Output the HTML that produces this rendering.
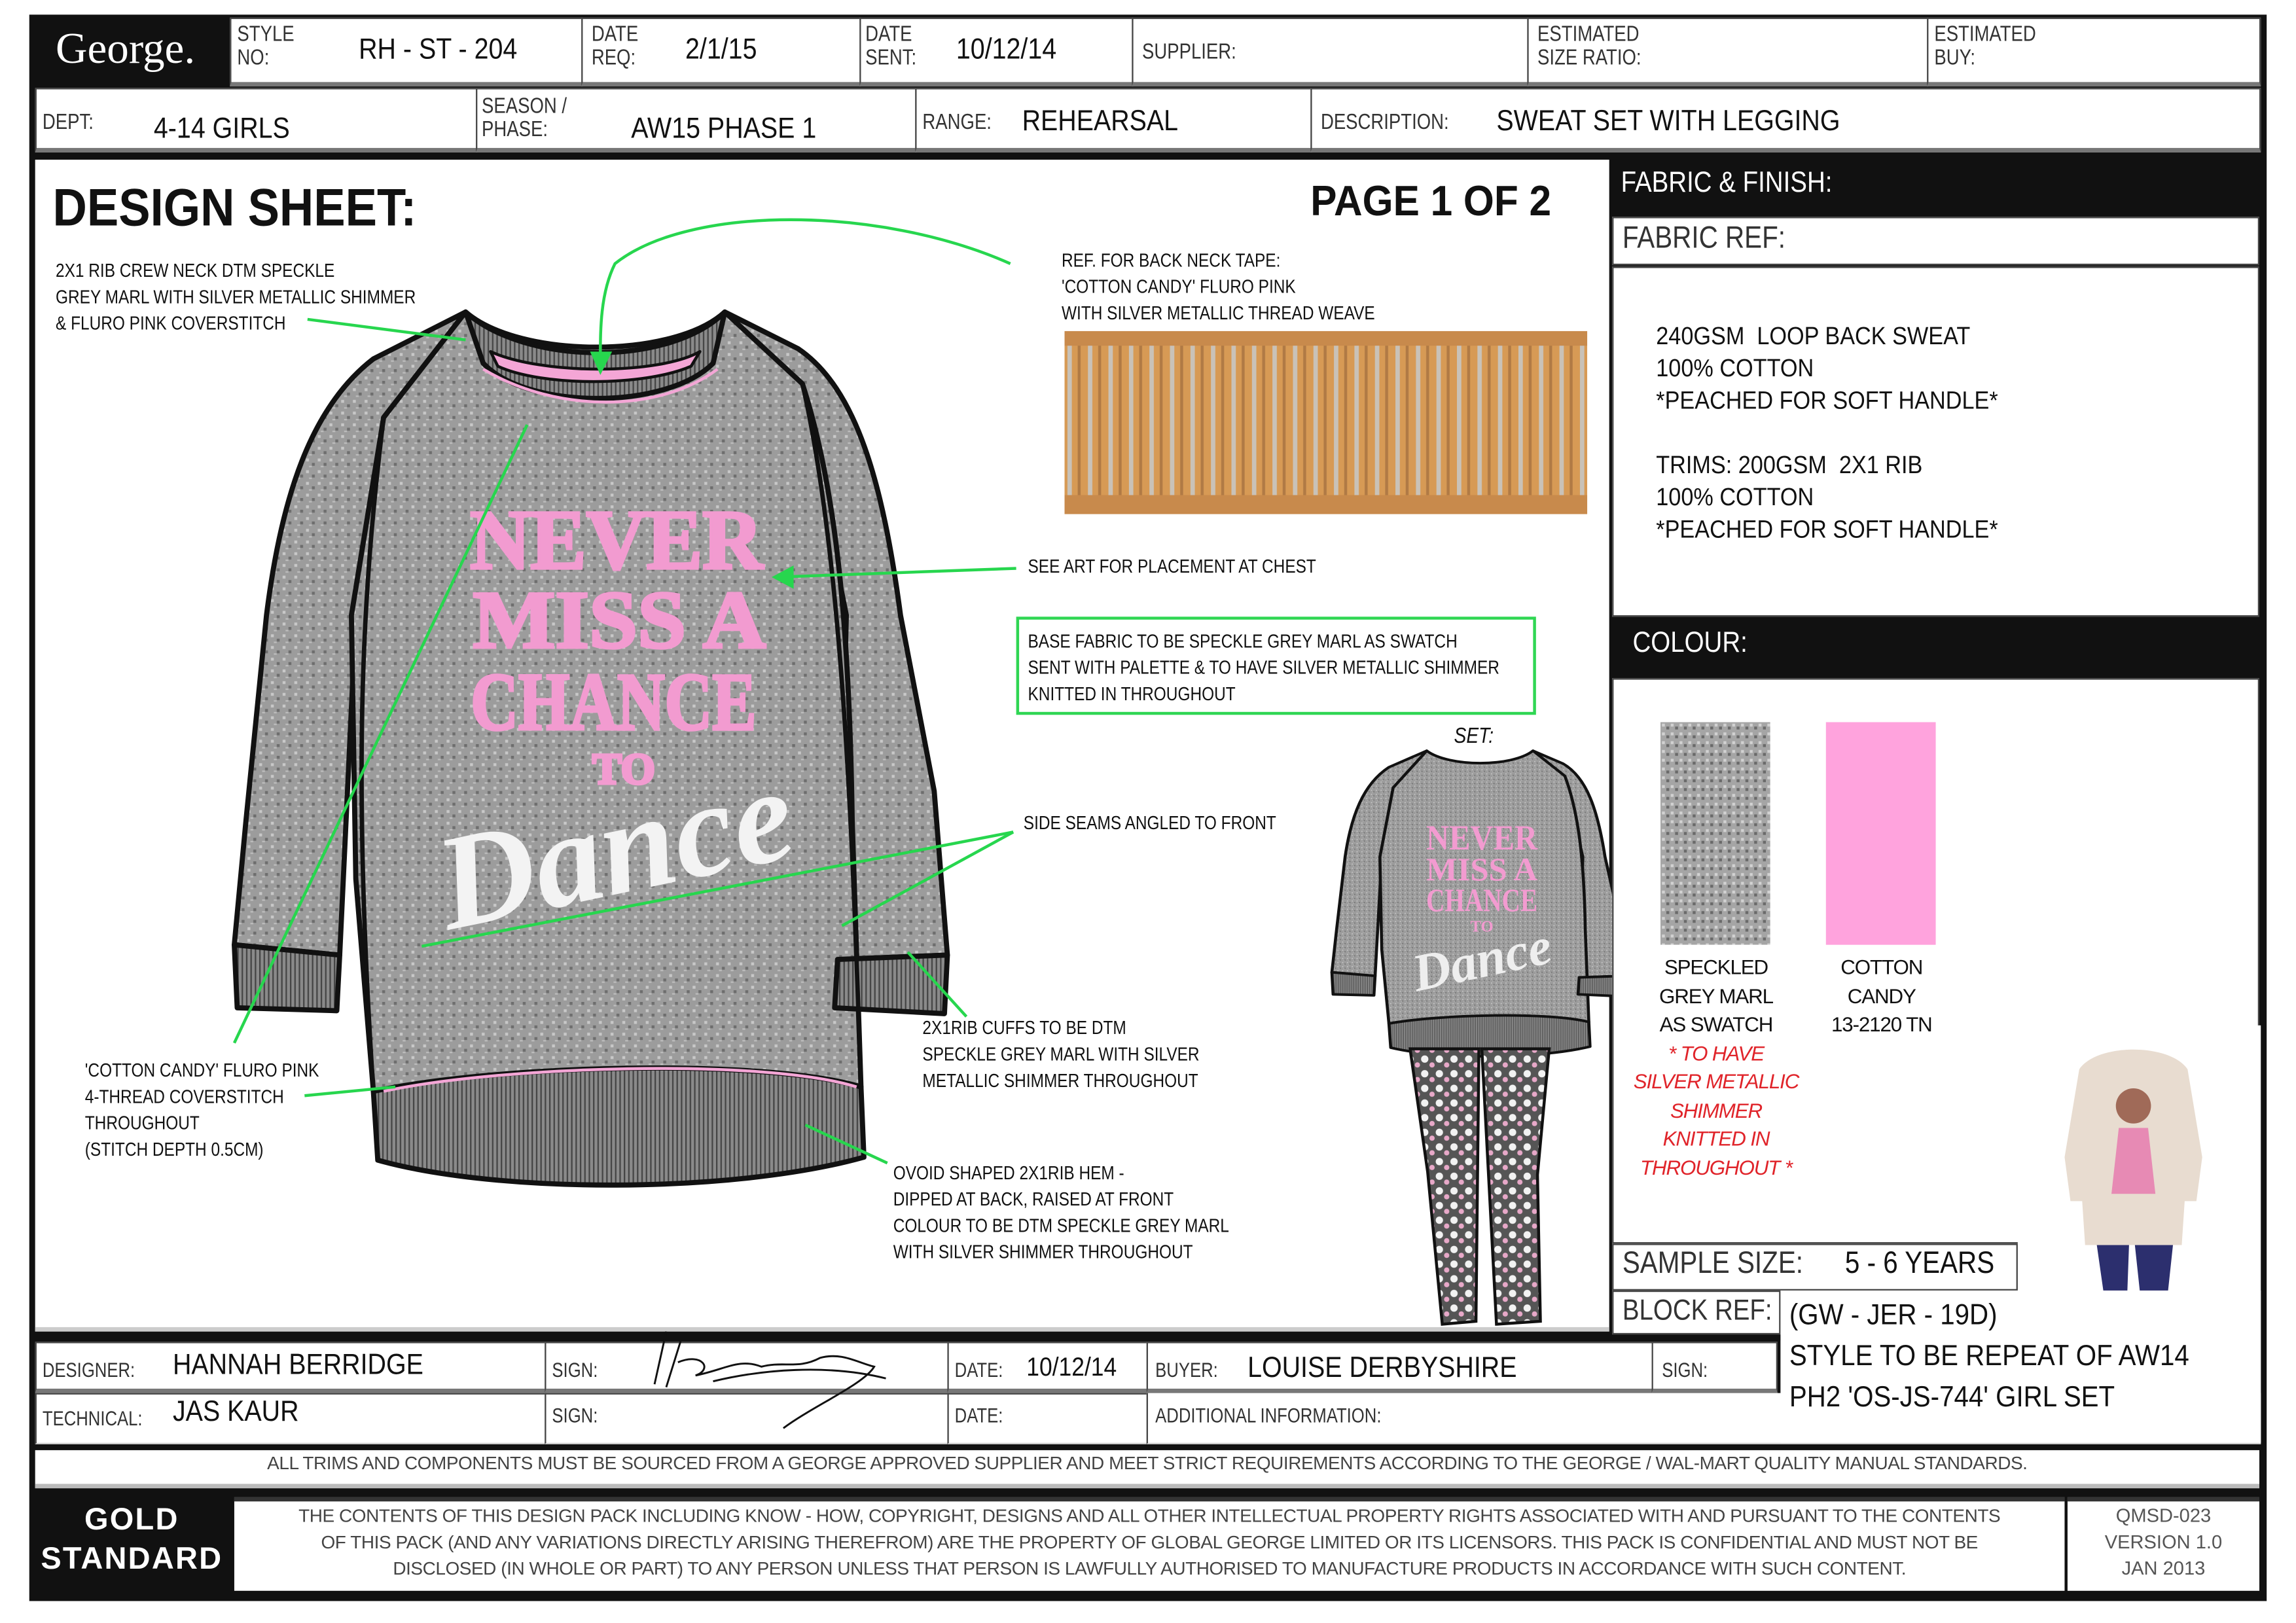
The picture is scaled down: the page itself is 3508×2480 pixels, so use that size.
<!DOCTYPE html>
<html><head><meta charset="utf-8">
<style>
html,body{margin:0;padding:0;background:#fff;}
body{width:3508px;height:2480px;overflow:hidden;position:relative;}
#s{position:absolute;left:0;top:0;width:1568px;height:1108px;transform:scale(2.2372,2.2383);transform-origin:0 0;font-family:"Liberation Sans Narrow","Liberation Sans",sans-serif;color:#111;}
.a{position:absolute;}
.bx{position:absolute;background:#fff;border:1.5px solid #444;box-sizing:border-box;border-bottom:3px solid #777;}
.lb{position:absolute;font-size:15px;line-height:16px;color:#333;transform:scaleX(.82);transform-origin:0 0;white-space:nowrap;}
.v{position:absolute;font-size:20px;color:#111;white-space:nowrap;transform:scaleX(.88);transform-origin:0 0;}
.t{position:absolute;font-size:13px;line-height:18px;white-space:nowrap;color:#111;transform:scaleX(.84);transform-origin:0 0;}
.n{transform:scaleX(.86);transform-origin:0 0;white-space:nowrap;}
.blk{position:absolute;background:#111;}
</style></head><body><div id="s">

<div class="blk" style="left:20px;top:10px;width:1528px;height:1083px;"></div>
<div class="a" style="left:38px;top:17px;font-family:'Liberation Serif',serif;font-size:30px;color:#fff;">George.</div>
<div class="bx" style="left:157px;top:12px;width:241px;height:47px;"></div>
<div class="lb" style="left:162px;top:16px;">STYLE<br>NO:</div><div class="v" style="left:245px;top:23px;">RH - ST - 204</div>
<div class="bx" style="left:397px;top:12px;width:191px;height:47px;"></div>
<div class="lb" style="left:404px;top:16px;">DATE<br>REQ:</div><div class="v" style="left:468px;top:23px;">2/1/15</div>
<div class="bx" style="left:587px;top:12px;width:187px;height:47px;"></div>
<div class="lb" style="left:591px;top:16px;">DATE<br>SENT:</div><div class="v" style="left:653px;top:23px;">10/12/14</div>
<div class="bx" style="left:773px;top:12px;width:271px;height:47px;"></div>
<div class="lb" style="left:780px;top:28px;">SUPPLIER:</div>
<div class="bx" style="left:1043px;top:12px;width:274px;height:47px;"></div>
<div class="lb" style="left:1050px;top:16px;">ESTIMATED<br>SIZE RATIO:</div>
<div class="bx" style="left:1316px;top:12px;width:228px;height:47px;"></div>
<div class="lb" style="left:1321px;top:16px;">ESTIMATED<br>BUY:</div>
<div class="bx" style="left:24px;top:60px;width:302px;height:44px;"></div>
<div class="lb" style="left:29px;top:76px;">DEPT:</div><div class="v" style="left:105px;top:77px;">4-14 GIRLS</div>
<div class="bx" style="left:325px;top:60px;width:301px;height:44px;"></div>
<div class="lb" style="left:329px;top:65px;">SEASON /<br>PHASE:</div><div class="v" style="left:431px;top:77px;">AW15 PHASE 1</div>
<div class="bx" style="left:625px;top:60px;width:271px;height:44px;"></div>
<div class="lb" style="left:630px;top:76px;">RANGE:</div><div class="v" style="left:698px;top:72px;">REHEARSAL</div>
<div class="bx" style="left:895px;top:60px;width:649px;height:44px;"></div>
<div class="lb" style="left:902px;top:76px;">DESCRIPTION:</div><div class="v" style="left:1022px;top:72px;">SWEAT SET WITH LEGGING</div>

<div class="a" style="left:24px;top:109px;width:1075px;height:800px;background:#fff;border-bottom:3px solid #ccc;box-sizing:border-box;"></div>
<div class="a n" style="left:36px;top:121px;font-family:'Liberation Sans',sans-serif;font-weight:bold;font-size:36px;transform:scaleX(.9);">DESIGN SHEET:</div>
<div class="a n" style="left:895px;top:122px;font-family:'Liberation Sans',sans-serif;font-weight:bold;font-size:29px;transform:scaleX(.93);">PAGE 1 OF 2</div>

<div class="t" style="left:38px;top:176px;">2X1 RIB CREW NECK DTM SPECKLE<br>GREY MARL WITH SILVER METALLIC SHIMMER<br>&amp; FLURO PINK COVERSTITCH</div>
<div class="t" style="left:725px;top:169px;">REF. FOR BACK NECK TAPE:<br>'COTTON CANDY' FLURO PINK<br>WITH SILVER METALLIC THREAD WEAVE</div>
<div class="t" style="left:702px;top:378px;">SEE ART FOR PLACEMENT AT CHEST</div>
<div class="a" style="left:694px;top:421px;width:355px;height:67px;border:2px solid #2fd653;box-sizing:border-box;"></div>
<div class="t" style="left:702px;top:429px;">BASE FABRIC TO BE SPECKLE GREY MARL AS SWATCH<br>SENT WITH PALETTE &amp; TO HAVE SILVER METALLIC SHIMMER<br>KNITTED IN THROUGHOUT</div>
<div class="t" style="left:993px;top:494px;font-style:italic;font-size:15px;">SET:</div>
<div class="t" style="left:699px;top:553px;">SIDE SEAMS ANGLED TO FRONT</div>
<div class="t" style="left:630px;top:693px;">2X1RIB CUFFS TO BE DTM<br>SPECKLE GREY MARL WITH SILVER<br>METALLIC SHIMMER THROUGHOUT</div>
<div class="t" style="left:58px;top:722px;">'COTTON CANDY' FLURO PINK<br>4-THREAD COVERSTITCH<br>THROUGHOUT<br>(STITCH DEPTH 0.5CM)</div>
<div class="t" style="left:610px;top:792px;">OVOID SHAPED 2X1RIB HEM -<br>DIPPED AT BACK, RAISED AT FRONT<br>COLOUR TO BE DTM SPECKLE GREY MARL<br>WITH SILVER SHIMMER THROUGHOUT</div>

<svg class="a" style="left:727px;top:226px" width="357" height="125">
<defs><pattern id="tp" width="14" height="125" patternUnits="userSpaceOnUse"><rect width="14" height="125" fill="#d79a55"/><rect x="2" y="8" width="3" height="110" fill="#c9c2b8"/><rect x="9" y="8" width="2" height="110" fill="#b07a45"/></pattern></defs>
<rect width="357" height="125" fill="url(#tp)"/><rect width="357" height="10" fill="#c88a4c"/><rect y="112" width="357" height="13" fill="#c88a4c"/></svg>

<svg class="a" style="left:0;top:0" width="1568" height="1108">
<defs>
<pattern id="sp" width="8" height="8" patternUnits="userSpaceOnUse"><rect width="8" height="8" fill="#9c9c9c"/><rect x="1" y="1" width="2" height="2" fill="#c8c8c8"/><rect x="5" y="4" width="2" height="2" fill="#6e6e6e"/><rect x="3" y="6" width="2" height="1" fill="#bdbdbd"/></pattern>
<pattern id="rb" width="3" height="6" patternUnits="userSpaceOnUse"><rect width="3" height="6" fill="#8a8a8a"/><rect width="1" height="6" fill="#444"/></pattern>
<pattern id="lg" width="10" height="10" patternUnits="userSpaceOnUse"><rect width="10" height="10" fill="#555"/><circle cx="3" cy="3" r="2.5" fill="#f2f2f2"/><circle cx="8" cy="7" r="1.8" fill="#e7a8c8"/></pattern>
</defs>
<g stroke="#111" stroke-width="3.5" stroke-linejoin="round">
<path d="M318,213 L255,245 C212,278 192,340 182,420 L168,560 L160,645 L232,652 L243,420 L262,285 Z" fill="url(#sp)"/>
<path d="M495,213 L545,238 C585,265 603,330 615,420 L638,540 L647,652 L572,655 L578,420 L548,270 Z" fill="url(#sp)"/>
<path d="M318,213 C355,245 460,245 495,213 L548,262 C570,330 580,420 582,560 L588,742 C520,722 340,728 255,745 L243,600 L240,420 L262,285 Z" fill="url(#sp)"/>
<path d="M160,645 L232,652 L230,690 L162,688 Z" fill="url(#rb)"/>
<path d="M572,655 L647,652 L645,692 L570,688 Z" fill="url(#rb)"/>
<path d="M255,745 C340,727 520,722 588,742 L590,790 C500,815 340,815 258,792 Z" fill="url(#rb)"/>
<path d="M318,213 C360,250 458,250 495,213 L487,248 C455,280 360,280 330,248 Z" fill="url(#rb)"/>
<path d="M335,240 C370,256 450,256 478,240 L472,250 C440,264 370,264 340,250 Z" fill="#f4a6d6" stroke-width="2"/>
<path d="M262,285 C248,400 240,520 255,745" fill="none" stroke-width="3"/>
<path d="M548,262 C575,380 582,560 588,742" fill="none" stroke-width="3"/>
</g>
<path d="M262,745 C340,728 520,722 585,742" stroke="#f4a6d6" stroke-width="2" fill="none"/>
<path d="M330,252 C380,282 450,282 490,252" stroke="#f4a6d6" stroke-width="2" fill="none"/>
<g font-family="Liberation Serif,serif" font-weight="bold" fill="#f29bd0" text-anchor="middle" stroke="#f29bd0" stroke-width="2">
<text x="421" y="388" font-size="58" textLength="200" lengthAdjust="spacingAndGlyphs">NEVER</text>
<text x="423" y="442" font-size="56" textLength="200" lengthAdjust="spacingAndGlyphs">MISS A</text>
<text x="419" y="498" font-size="56" textLength="195" lengthAdjust="spacingAndGlyphs">CHANCE</text>
<text x="426" y="535" font-size="30">TO</text></g>
<text x="420" y="610" text-anchor="middle" font-family="Liberation Serif,serif" font-style="italic" font-weight="bold" font-size="92" fill="#f3f3f3" transform="rotate(-12 420 580)">Dance</text>

<g transform="translate(844,438) scale(0.41,0.35)">
<g stroke="#111" stroke-width="5" stroke-linejoin="round">
<path d="M318,213 L255,245 C212,278 192,340 182,420 L168,560 L160,645 L232,652 L243,420 L262,285 Z" fill="url(#sp)"/>
<path d="M495,213 L545,238 C585,265 603,330 615,420 L638,540 L647,652 L572,655 L578,420 L548,270 Z" fill="url(#sp)"/>
<path d="M318,213 C355,245 460,245 495,213 L548,262 C570,330 580,420 582,560 L588,742 C520,722 340,728 255,745 L243,600 L240,420 L262,285 Z" fill="url(#sp)"/>
<path d="M255,745 C340,727 520,722 588,742 L590,790 C500,815 340,815 258,792 Z" fill="url(#rb)"/>
<path d="M160,645 L232,652 L230,690 L162,688 Z" fill="url(#rb)"/>
<path d="M572,655 L647,652 L645,692 L570,688 Z" fill="url(#rb)"/>
</g></g>
<g font-family="Liberation Serif,serif" font-weight="bold" fill="#f29bd0" text-anchor="middle">
<text x="1012" y="580" font-size="24" textLength="76" lengthAdjust="spacingAndGlyphs">NEVER</text>
<text x="1012" y="601" font-size="22" textLength="76" lengthAdjust="spacingAndGlyphs">MISS A</text>
<text x="1012" y="622" font-size="22" textLength="76" lengthAdjust="spacingAndGlyphs">CHANCE</text>
<text x="1012" y="636" font-size="11">TO</text></g>
<text x="1012" y="667" text-anchor="middle" font-family="Liberation Serif,serif" font-style="italic" font-weight="bold" font-size="36" fill="#eee" transform="rotate(-12 1012 655)">Dance</text>
<path d="M963,716 L1010,716 L1008,902 L985,904 L975,800 Z" fill="url(#lg)" stroke="#111" stroke-width="2"/>
<path d="M1012,716 L1058,716 L1050,802 L1052,902 L1022,904 Z" fill="url(#lg)" stroke="#111" stroke-width="2"/>

<g stroke="#27d64e" stroke-width="2" fill="none">
<path d="M690,180 C600,140 470,140 420,180 C410,200 410,225 410,245"/>
<path d="M210,218 L318,232"/>
<path d="M360,290 L160,712"/>
<path d="M208,748 L270,742"/>
<path d="M694,388 L530,394"/>
<path d="M692,568 L288,646"/>
<path d="M692,568 L575,632"/>
<path d="M660,694 L620,650"/>
<path d="M606,794 L550,768"/>
<path d="M1506,925 C1514,910 1512,900 1512,890"/>
</g>
<g fill="#27d64e"><path d="M403,240 L418,240 L410,256 Z"/><path d="M527,394 L542,386 L542,402 Z"/><path d="M1506,888 L1518,902 L1508,902 Z"/></g>
</svg>

<div class="a n" style="left:1107px;top:114px;color:#fff;font-size:20px;">FABRIC &amp; FINISH:</div>
<div class="bx" style="left:1101px;top:148px;width:442px;height:33px;border-bottom:1.5px solid #444;"></div>
<div class="a n" style="left:1108px;top:151px;font-size:21px;color:#333;">FABRIC REF:</div>
<div class="bx" style="left:1101px;top:182px;width:442px;height:239px;border-bottom:1.5px solid #444;"></div>
<div class="a n" style="left:1131px;top:219px;font-size:17px;line-height:22px;white-space:pre;transform:scaleX(.9);">240GSM  LOOP BACK SWEAT
100% COTTON
*PEACHED FOR SOFT HANDLE*

TRIMS: 200GSM  2X1 RIB
100% COTTON
*PEACHED FOR SOFT HANDLE*</div>
<div class="a n" style="left:1115px;top:428px;color:#fff;font-size:20px;">COLOUR:</div>
<div class="bx" style="left:1101px;top:463px;width:442px;height:386px;border-bottom:1.5px solid #444;"></div>
<svg class="a" style="left:1134px;top:493px" width="75" height="152"><defs><pattern id="sp2" width="6" height="6" patternUnits="userSpaceOnUse"><rect width="6" height="6" fill="#a5a5a5"/><rect x="1" y="1" width="2" height="2" fill="#d2d2d2"/><rect x="4" y="3" width="2" height="2" fill="#6a6a6a"/></pattern></defs><rect width="75" height="152" fill="url(#sp2)"/></svg>
<div class="a" style="left:1247px;top:493px;width:75px;height:152px;background:#ffa3dd;"></div>
<div class="a" style="left:1100px;top:651px;width:144px;text-align:center;font-size:14px;line-height:19.5px;letter-spacing:-0.5px;">SPECKLED<br>GREY MARL<br>AS SWATCH<br><span style="color:#e0242a;font-style:italic;">* TO HAVE<br>SILVER METALLIC<br>SHIMMER<br>KNITTED IN<br>THROUGHOUT *</span></div>
<div class="a" style="left:1230px;top:651px;width:110px;text-align:center;font-size:14px;line-height:19.5px;letter-spacing:-0.5px;">COTTON<br>CANDY<br>13-2120 TN</div>
<div class="a" style="left:1378px;top:700px;width:166px;height:215px;background:#fff;"></div>
<svg class="a" style="left:1392px;top:700px" width="140" height="212">
<path d="M28,30 C40,12 90,12 102,30 L112,90 L108,120 L100,120 L98,150 L32,150 L30,120 L22,120 L18,90 Z" fill="#e8dcd0"/>
<path d="M40,150 L62,150 L60,205 L48,206 Z M66,150 L92,150 L86,206 L72,206 Z" fill="#2c2f6e"/>
<circle cx="65" cy="55" r="12" fill="#a06a58"/><path d="M55,70 L75,70 L80,115 L50,115 Z" fill="#e78ab4"/>
</svg>
<div class="bx" style="left:1101px;top:849px;width:277px;height:32px;border-bottom:1.5px solid #444;"></div>
<div class="a n" style="left:1108px;top:851px;font-size:21px;color:#333;">SAMPLE SIZE:</div>
<div class="a n" style="left:1260px;top:851px;font-size:21px;">5 - 6 YEARS</div>
<div class="bx" style="left:1101px;top:881px;width:115px;height:30px;border-bottom:1.5px solid #444;"></div>
<div class="a n" style="left:1108px;top:884px;font-size:20px;color:#333;">BLOCK REF:</div>
<div class="a" style="left:1216px;top:881px;width:328px;height:104px;background:#fff;"></div>
<div class="a n" style="left:1222px;top:884px;font-size:20px;line-height:28px;transform:scaleX(.9);">(GW - JER - 19D)<br>STYLE TO BE REPEAT OF AW14<br>PH2 'OS-JS-744' GIRL SET</div>

<div class="bx" style="left:24px;top:916px;width:349px;height:35px;"></div>
<div class="lb" style="left:29px;top:927px;font-size:14px;">DESIGNER:</div><div class="v" style="left:118px;top:921px;">HANNAH BERRIDGE</div>
<div class="bx" style="left:372px;top:916px;width:276px;height:35px;"></div>
<div class="lb" style="left:377px;top:927px;font-size:14px;">SIGN:</div>
<div class="bx" style="left:647px;top:916px;width:137px;height:35px;"></div>
<div class="lb" style="left:652px;top:927px;font-size:14px;">DATE:</div><div class="v" style="left:701px;top:923px;font-size:18px;">10/12/14</div>
<div class="bx" style="left:783px;top:916px;width:346px;height:35px;"></div>
<div class="lb" style="left:789px;top:927px;font-size:14px;">BUYER:</div><div class="v" style="left:852px;top:923px;">LOUISE DERBYSHIRE</div>
<div class="bx" style="left:1128px;top:916px;width:86px;height:35px;"></div>
<div class="lb" style="left:1135px;top:927px;font-size:14px;">SIGN:</div>
<div class="bx" style="left:24px;top:951px;width:349px;height:35px;border-bottom:1.5px solid #ccc;"></div>
<div class="lb" style="left:29px;top:960px;font-size:14px;">TECHNICAL:</div><div class="v" style="left:118px;top:953px;">JAS KAUR</div>
<div class="bx" style="left:372px;top:951px;width:276px;height:35px;border-bottom:1.5px solid #ccc;"></div>
<div class="lb" style="left:377px;top:958px;font-size:14px;">SIGN:</div>
<div class="bx" style="left:647px;top:951px;width:137px;height:35px;border-bottom:1.5px solid #ccc;"></div>
<div class="lb" style="left:652px;top:958px;font-size:14px;">DATE:</div>
<div class="a" style="left:783px;top:951px;width:761px;height:35px;background:#fff;border-left:1.5px solid #444;border-bottom:1.5px solid #ccc;box-sizing:border-box;"></div>
<div class="lb" style="left:789px;top:958px;font-size:14px;">ADDITIONAL INFORMATION:</div>
<div class="a" style="left:1216px;top:915px;width:328px;height:70px;background:#fff;"></div>
<div class="a n" style="left:1222px;top:912px;font-size:20px;line-height:28px;transform:scaleX(.9);">STYLE TO BE REPEAT OF AW14<br>PH2 'OS-JS-744' GIRL SET</div>
<svg class="a" style="left:425px;top:905px" width="190" height="75"><path d="M30,4 L22,40 M40,10 L30,42 M38,25 C55,18 62,30 50,34 C70,30 80,22 95,28 C110,24 120,30 135,22 C150,18 160,25 172,28 C165,40 130,55 110,70 M62,38 C95,30 140,26 180,36" stroke="#111" stroke-width="1.3" fill="none"/></svg>

<div class="a" style="left:24px;top:990px;width:1519px;height:26px;background:#fff;border-bottom:3px solid #bbb;box-sizing:border-box;"></div>
<div class="a" style="left:24px;top:992px;width:1519px;text-align:center;font-size:12.5px;color:#444;letter-spacing:-0.2px;">ALL TRIMS AND COMPONENTS MUST BE SOURCED FROM A GEORGE APPROVED SUPPLIER AND MEET STRICT REQUIREMENTS ACCORDING TO THE GEORGE / WAL-MART QUALITY MANUAL STANDARDS.</div>
<div class="a" style="left:26px;top:1024px;width:128px;text-align:center;color:#fff;font-family:'Liberation Sans',sans-serif;font-weight:bold;font-size:21px;line-height:27px;letter-spacing:1px;">GOLD<br>STANDARD</div>
<div class="a" style="left:160px;top:1022px;width:1250px;height:64px;background:#fff;border-top:3px solid #333;box-sizing:border-box;"></div>
<div class="a" style="left:160px;top:1026px;width:1250px;text-align:center;font-size:12.5px;line-height:18px;color:#444;letter-spacing:-0.2px;">THE CONTENTS OF THIS DESIGN PACK INCLUDING KNOW - HOW, COPYRIGHT, DESIGNS AND ALL OTHER INTELLECTUAL PROPERTY RIGHTS ASSOCIATED WITH AND PURSUANT TO THE CONTENTS<br>OF THIS PACK (AND ANY VARIATIONS DIRECTLY ARISING THEREFROM) ARE THE PROPERTY OF GLOBAL GEORGE LIMITED OR ITS LICENSORS. THIS PACK IS CONFIDENTIAL AND MUST NOT BE<br>DISCLOSED (IN WHOLE OR PART) TO ANY PERSON UNLESS THAT PERSON IS LAWFULLY AUTHORISED TO MANUFACTURE PRODUCTS IN ACCORDANCE WITH SUCH CONTENT.</div>
<div class="a" style="left:1412px;top:1022px;width:131px;height:64px;background:#fff;border-top:3px solid #333;box-sizing:border-box;"></div>
<div class="a" style="left:1412px;top:1026px;width:131px;text-align:center;font-size:13px;line-height:18px;color:#555;">QMSD-023<br>VERSION 1.0<br>JAN 2013</div>
</div></body></html>
